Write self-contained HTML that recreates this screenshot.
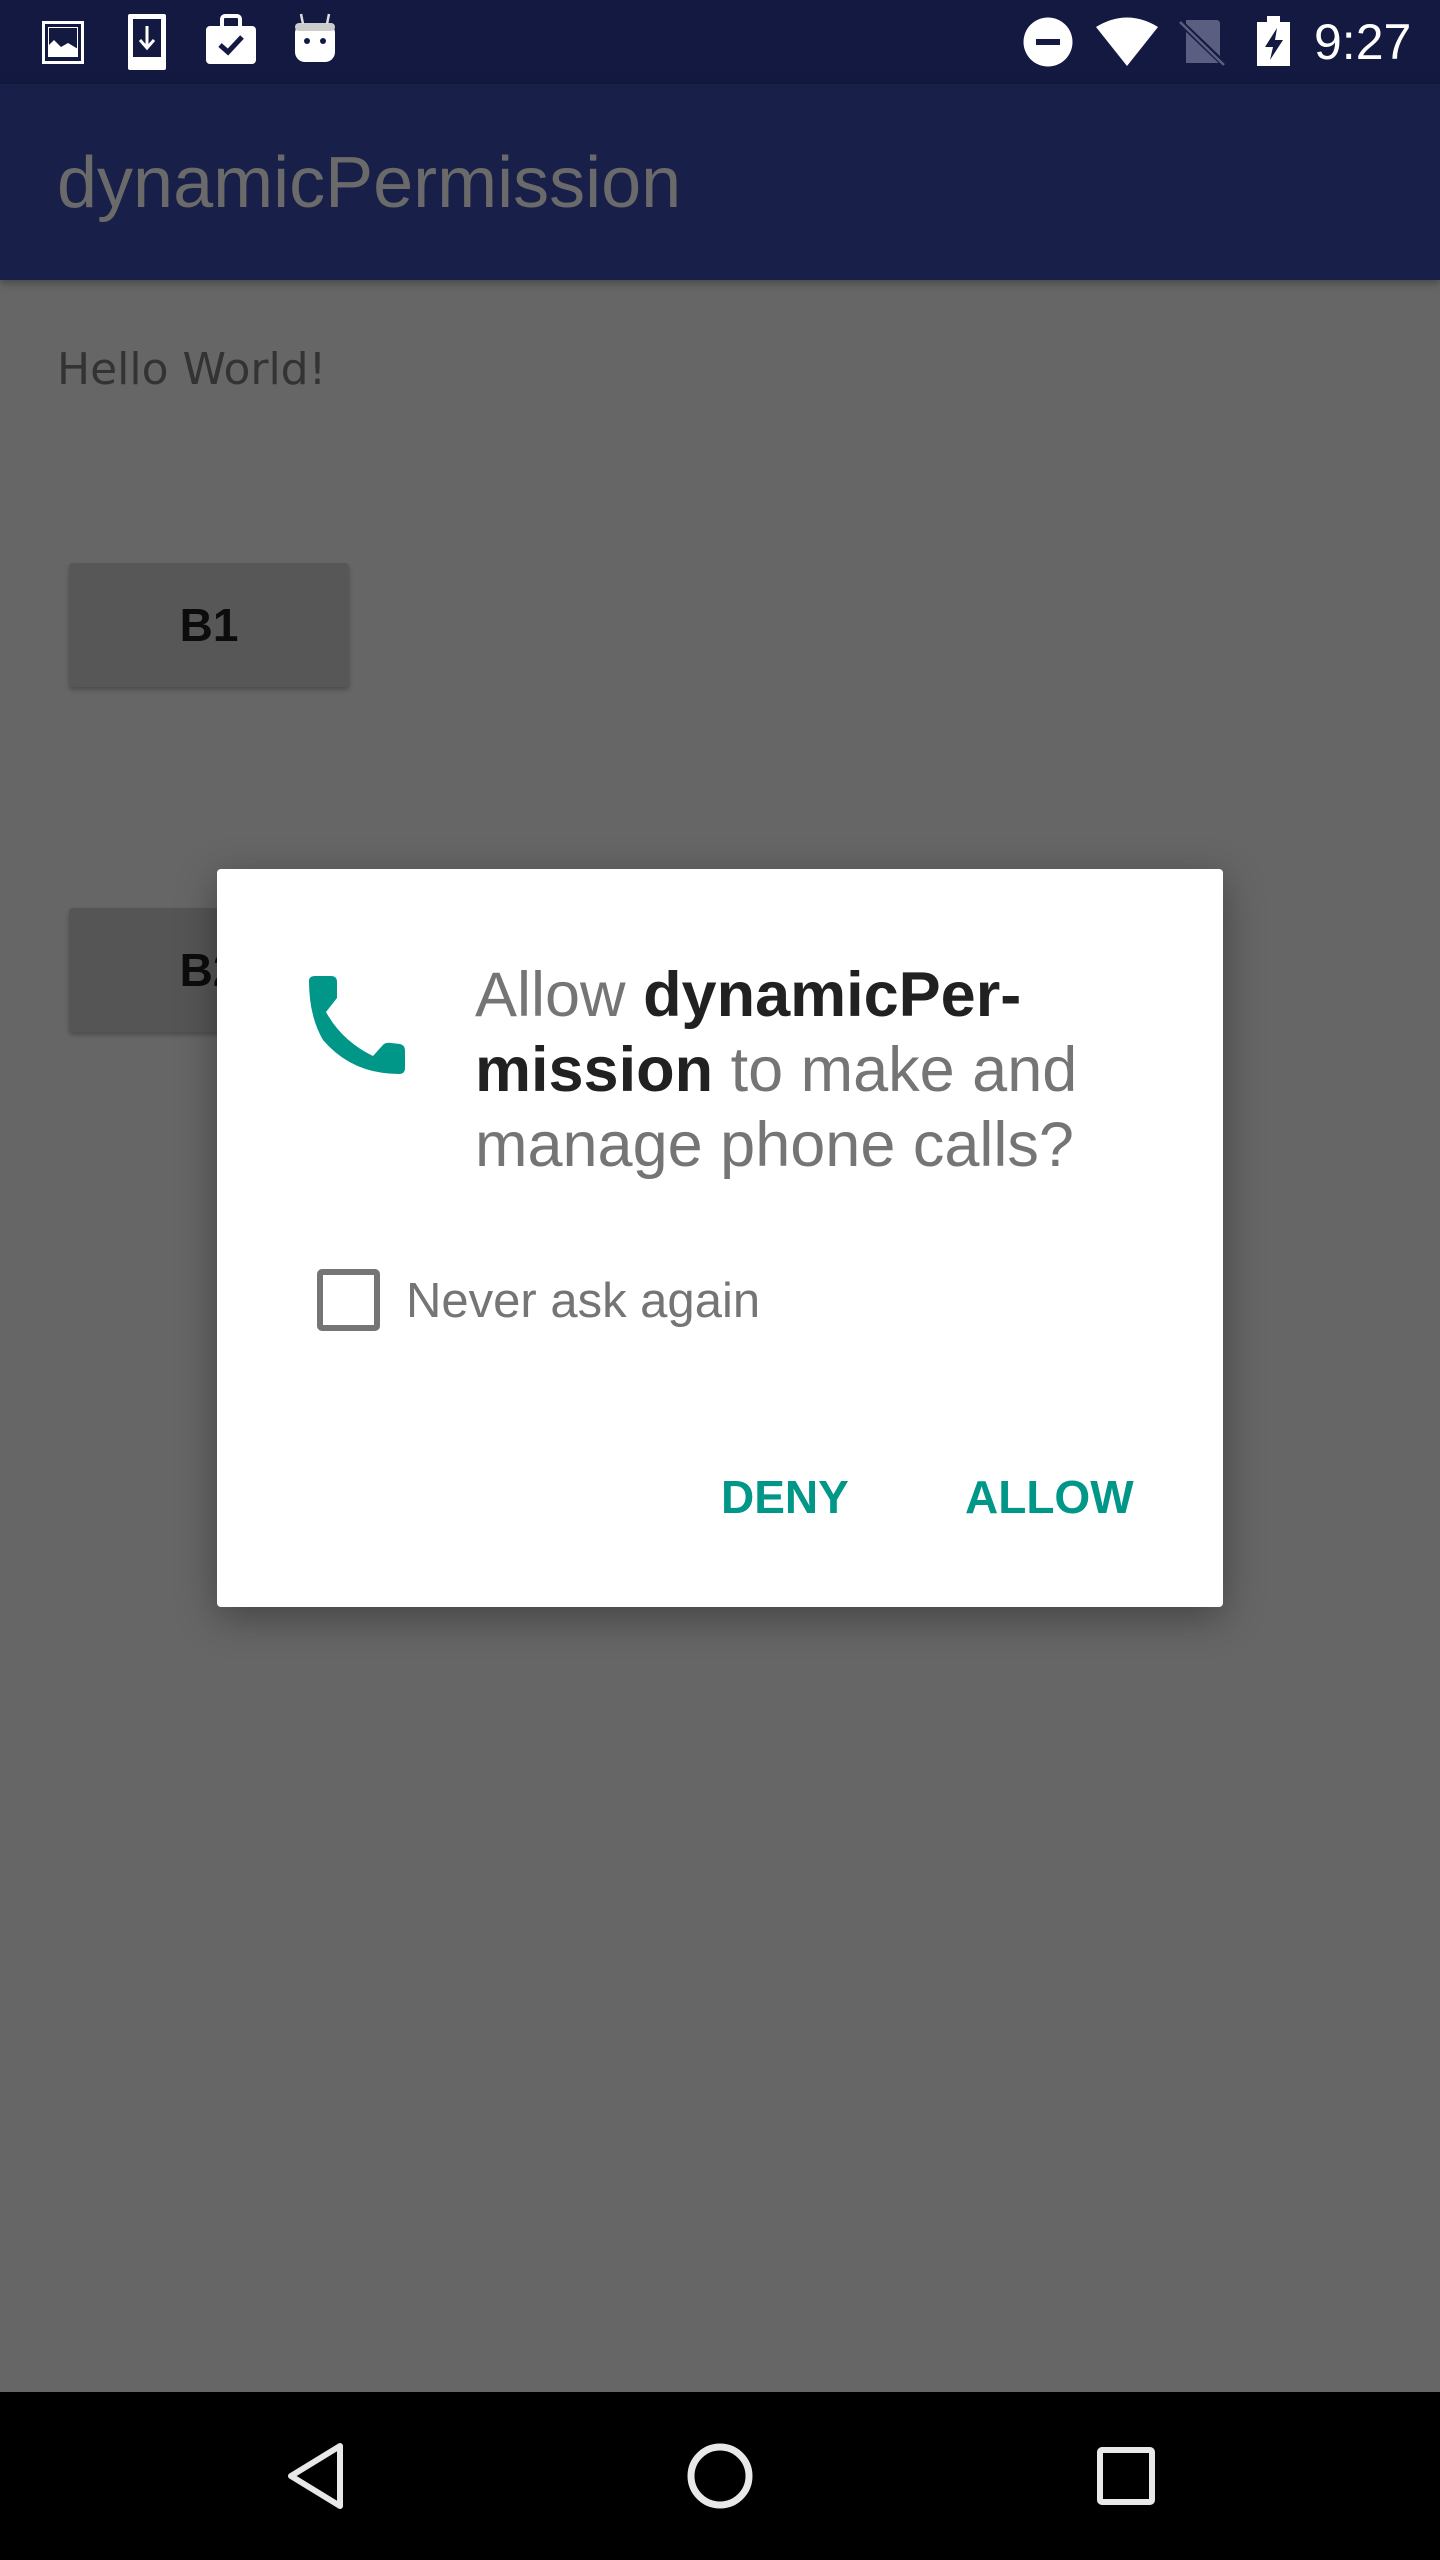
<!DOCTYPE html>
<html><head><meta charset="utf-8"><style>
*{margin:0;padding:0;box-sizing:border-box}
body{width:1440px;height:2560px;position:relative;background:#666;overflow:hidden;font-family:"Liberation Sans",sans-serif}
.abs{position:absolute}
</style></head><body>
<div class="abs" style="left:0;top:0;width:1440px;height:84px;background:#141941"></div>
<div class="abs" style="left:0;top:84px;width:1440px;height:196px;background:#181f48;box-shadow:0 3px 8px rgba(0,0,0,.3)"></div>
<svg class="abs" style="left:0;top:0" width="1440" height="84">
 <g fill="none" stroke="#fff" stroke-width="3"><rect x="43.5" y="22.5" width="39" height="40"/></g>
 <rect x="48" y="27" width="30" height="30" fill="#fff"/><rect x="49" y="28" width="28" height="25" fill="#141941"/>
 <path d="M48 53 L48 46 L54 40 L61 47 L68 43 L78 49 L78 53Z" fill="#fff"/>
 <rect x="128" y="14" width="38" height="56" rx="2" fill="#fff"/><rect x="133" y="19" width="28" height="38" fill="#141941"/>
 <path d="M147 26 V46 M140 40 L147 48 L154 40" stroke="#fff" stroke-width="3" fill="none"/>
 <rect x="206" y="26" width="50" height="38" rx="4" fill="#fff"/><rect x="222" y="16" width="18" height="14" rx="3" fill="none" stroke="#fff" stroke-width="4"/>
 <path d="M220 45 L228 52 L242 37" stroke="#141941" stroke-width="5" fill="none"/>
 <rect x="295" y="23" width="40" height="39" rx="10" fill="#fff"/><rect x="295" y="23" width="40" height="8" rx="4" fill="#ccc"/>
 <path d="M303 24 L301 14 M327 24 L329 14" stroke="#ddd" stroke-width="2.5"/>
 <circle cx="307" cy="41" r="3" fill="#141941"/><circle cx="323" cy="41" r="3" fill="#141941"/>
 <circle cx="1048" cy="42" r="24.5" fill="#fff"/><rect x="1036" y="39" width="24" height="6" fill="#141941"/>
 <path d="M1096 27 Q1127 8 1158 27 L1127 66Z" fill="#fff"/>
 <path d="M1186 20 H1216 Q1220 20 1220 24 V63 H1186Z" fill="#5a5e80"/>
 <path d="M1180 22 L1225 65" stroke="#141941" stroke-width="6"/><path d="M1180 22 L1224 65" stroke="#5a5e80" stroke-width="2.5"/>
 <rect x="1257" y="22" width="33" height="44" fill="#fff"/><rect x="1267" y="16" width="13" height="7" fill="#fff"/>
 <path d="M1277 28 L1265 47 H1273 L1270 60 L1283 40 H1275Z" fill="#141941"/>
</svg>
<div class="abs" style="left:1314px;top:12px;font-size:50px;color:#fff;line-height:60px">9:27</div>
<div class="abs" style="left:57px;top:138px;font-size:72px;color:#6a6a6a;line-height:90px">dynamicPermission</div>
<div class="abs" style="left:57px;top:338px;font-family:'DejaVu Sans',sans-serif;font-size:44px;color:#333;line-height:64px">Hello World!</div>
<div class="abs" style="left:69px;top:563px;width:280px;height:124px;background:#575757;border-radius:4px;box-shadow:0 3px 5px rgba(0,0,0,.25);font-weight:bold;font-size:46px;color:#0c0c0c;text-align:center;line-height:124px">B1</div>
<div class="abs" style="left:69px;top:908px;width:280px;height:124px;background:#555;border-radius:4px;box-shadow:0 3px 5px rgba(0,0,0,.25);font-weight:bold;font-size:46px;color:#0c0c0c;text-align:center;line-height:124px">B2</div>
<div class="abs" style="left:217px;top:869px;width:1006px;height:738px;background:#fff;border-radius:4px;box-shadow:0 10px 40px rgba(0,0,0,.35)"></div>
<svg class="abs" style="left:307px;top:976px" width="100" height="100" viewBox="0 0 100 100">
 <path d="M2 5 Q2 0 8 0 H24 Q30 0 30 6 V22 L19 36 Q35 65 66 80 L75 70 Q78 66 84 67 L93 68 Q98 69 98 75 V92 Q98 98 92 98 Q45 98 16 64 Q2 40 2 5Z" fill="#009688"/>
</svg>
<div class="abs" style="left:475px;top:958px;width:720px;font-size:63px;line-height:75px;color:#757575">Allow <b style="color:#212121">dynamicPer-<br>mission</b> to make and<br>manage phone calls?</div>
<div class="abs" style="left:317px;top:1269px;width:63px;height:62px;border:6px solid #757575;border-radius:5px"></div>
<div class="abs" style="left:406px;top:1270px;font-size:49px;line-height:62px;color:#757575">Never ask again</div>
<div class="abs" style="left:721px;top:1466px;font-size:46px;font-weight:bold;line-height:62px;color:#009688">DENY</div>
<div class="abs" style="left:965px;top:1466px;font-size:46px;font-weight:bold;line-height:62px;color:#009688">ALLOW</div>
<div class="abs" style="left:0;top:2392px;width:1440px;height:168px;background:#000"></div>
<svg class="abs" style="left:0;top:2392px" width="1440" height="168">
 <path d="M340 54 L291 84 L340 114Z" fill="none" stroke="#e8e8e8" stroke-width="6" stroke-linejoin="round"/>
 <circle cx="720" cy="84" r="29" fill="none" stroke="#e8e8e8" stroke-width="7"/>
 <rect x="1100" y="58" width="52" height="52" rx="2" fill="none" stroke="#e8e8e8" stroke-width="6"/>
</svg>
</body></html>
